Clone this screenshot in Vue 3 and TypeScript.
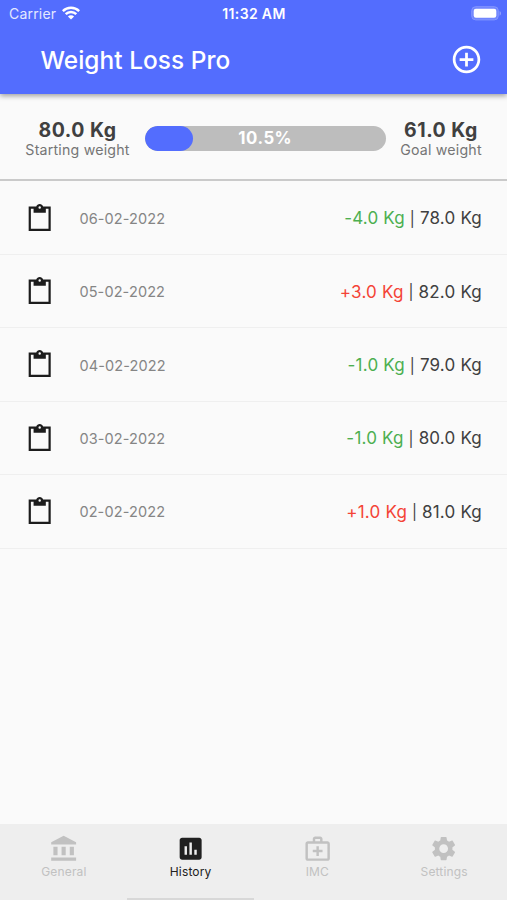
<script setup lang="ts">
interface Entry {
  date: string
  change: string
  weight: string
  gained: boolean
}

interface Tab {
  label: string
  path: string
  active: boolean
}

const progress = 10.5

const entries: Entry[] = [
  { date: '06-02-2022', change: '-4.0 Kg', weight: '78.0 Kg', gained: false },
  { date: '05-02-2022', change: '+3.0 Kg', weight: '82.0 Kg', gained: true },
  { date: '04-02-2022', change: '-1.0 Kg', weight: '79.0 Kg', gained: false },
  { date: '03-02-2022', change: '-1.0 Kg', weight: '80.0 Kg', gained: false },
  { date: '02-02-2022', change: '+1.0 Kg', weight: '81.0 Kg', gained: true },
]

const tabs: Tab[] = [
  {
    label: 'General',
    path: 'M12 1.400 1.800 6.700V8.500h20.400V6.700zM3.600 10.400h3.400v7H3.600zM10.300 10.400h3.400v7h-3.400zM17 10.400h3.400v7H17zM1.800 19.300h20.400V22H1.800z',
    active: false,
  },
  {
    label: 'History',
    path: 'M19 3H5c-1.1 0-2 .9-2 2v14c0 1.1.9 2 2 2h14c1.1 0 2-.9 2-2V5c0-1.1-.9-2-2-2zM9 17H7v-7h2v7zm4 0h-2V7h2v10zm4 0h-2v-4h2v4z',
    active: true,
  },
  {
    label: 'IMC',
    path: 'M20 6h-4V4c0-1.1-.9-2-2-2h-4c-1.1 0-2 .9-2 2v2H4c-1.1 0-2 .9-2 2v12c0 1.1.9 2 2 2h16c1.1 0 2-.9 2-2V8c0-1.1-.9-2-2-2zM10 4h4v2h-4V4zm10 16H4V8h16v12zM13 10h-2v3H8v2h3v3h2v-3h3v-2h-3z',
    active: false,
  },
  {
    label: 'Settings',
    path: 'M19.14 12.94c.04-.3.06-.61.06-.94 0-.32-.02-.64-.07-.94l2.03-1.58c.18-.14.23-.41.12-.61l-1.92-3.32c-.12-.22-.37-.29-.59-.22l-2.39.96c-.5-.38-1.03-.7-1.62-.94l-.36-2.54c-.04-.24-.24-.41-.48-.41h-3.84c-.24 0-.43.17-.47.41l-.36 2.54c-.59.24-1.13.57-1.62.94l-2.39-.96c-.22-.08-.47 0-.59.22L2.74 8.87c-.12.21-.08.47.12.61l2.03 1.58c-.05.3-.09.63-.09.94s.02.64.07.94l-2.03 1.58c-.18.14-.23.41-.12.61l1.92 3.32c.12.22.37.29.59.22l2.39-.96c.5.38 1.03.7 1.62.94l.36 2.54c.05.24.24.41.48.41h3.84c.24 0 .44-.17.47-.41l.36-2.54c.59-.24 1.13-.56 1.62-.94l2.39.96c.22.08.47 0 .59-.22l1.92-3.32c.12-.22.07-.47-.12-.61l-2.01-1.58zM12 15.6c-1.98 0-3.6-1.62-3.6-3.6s1.62-3.6 3.6-3.6 3.6 1.62 3.6 3.6-1.62 3.6-3.6 3.6z',
    active: false,
  },
]
</script>

<template>
  <div class="screen">
    <header class="top">
      <div class="status">
        <div class="carrier">
          <span>Carrier</span>
          <svg class="wifi" viewBox="0 0 18 14">
            <path d="M.8 5.100a11.600 11.600 0 0 1 16.400 0M3.700 8.200a7.500 7.500 0 0 1 10.600 0" fill="none" stroke="#fff" stroke-width="2.500" />
            <path d="M9 13.600 5.900 10.500a4.400 4.400 0 0 1 6.200 0z" fill="#fff" />
          </svg>
        </div>
        <span class="clock">11:32 AM</span>
        <svg class="battery" viewBox="0 0 31 15">
          <rect x="0.700" y="0.700" width="26.600" height="13.200" rx="4" fill="#7085fe" stroke="#8396fe" stroke-width="1" />
          <rect x="2.700" y="2.800" width="22.600" height="9" rx="2.200" fill="#fff" />
          <path d="M28.700 5c1.500.7 1.500 4 0 4.700z" fill="#a0aefe" />
        </svg>
      </div>
      <div class="bar">
        <h1>Weight Loss Pro</h1>
        <button class="add" aria-label="Add">
          <svg viewBox="0 0 24 24">
            <path d="M13 7h-2v4H7v2h4v4h2v-4h4v-2h-4V7zm-1-5C6.480 2 2 6.480 2 12s4.480 10 10 10 10-4.480 10-10S17.520 2 12 2zm0 18c-4.410 0-8-3.590-8-8s3.590-8 8-8 8 3.590 8 8-3.590 8-8 8z" fill="#fff" />
          </svg>
        </button>
      </div>
    </header>

    <section class="summary">
      <div class="goal start">
        <strong>80.0 Kg</strong>
        <span>Starting weight</span>
      </div>
      <div class="track">
        <div class="fill" :style="{ width: `calc(${progress}% + 22.4px)` }"></div>
        <span class="percent">{{ progress }}%</span>
      </div>
      <div class="goal end">
        <strong>61.0 Kg</strong>
        <span>Goal weight</span>
      </div>
    </section>

    <main class="list">
      <div v-for="entry in entries" :key="entry.date" class="row">
        <svg class="clip" viewBox="0 0 24 24">
          <path fill-rule="evenodd" d="M21 2h-6.180C14.400.840 13.300 0 12 0S9.600.840 9.180 2H3v20h18V2zm-9-.200a1 1 0 1 1 0 2 1 1 0 0 1 0-2zm7.200 18.400H4.800V3.800H7v3.300h10V3.800h2.200v16.400z" fill="#1c1c1c" />
        </svg>
        <span class="date">{{ entry.date }}</span>
        <span class="values"><span :class="entry.gained ? 'gain' : 'loss'">{{ entry.change }}</span><span class="divider">|</span>{{ entry.weight }}</span>
      </div>
    </main>

    <nav class="tabs">
      <div v-for="tab in tabs" :key="tab.label" class="tab" :class="{ active: tab.active }">
        <svg viewBox="0 0 24 24"><path :d="tab.path" fill="currentColor" /></svg>
        <span>{{ tab.label }}</span>
      </div>
    </nav>
  </div>
</template>

<style>
body {
  margin: 0;
  background: #fafafa;
}
</style>

<style scoped>
.screen {
  display: flex;
  flex-direction: column;
  width: 100%;
  height: 900px;
  overflow: hidden;
  background: #fafafa;
  font-family: Inter, "Liberation Sans", sans-serif;
  color: #404040;
}
.top {
  position: relative;
  flex: none;
  height: 93.7px;
  background: #536dfe;
  color: #fff;
  box-shadow: 0 2px 5px rgba(0, 0, 0, 0.36);
}
.status {
  display: grid;
  grid-template-columns: 1fr auto 1fr;
  align-items: center;
  height: 27px;
  padding: 0 7px 0 9px;
}
.carrier {
  display: flex;
  align-items: center;
  gap: 5.5px;
  font-size: 14px;
  letter-spacing: 0.2px;
  color: #e4e8ff;
}
.wifi {
  width: 18px;
  height: 14px;
  margin-top: -1px;
}
.clock {
  margin-left: -1px;
  font-size: 14px;
  font-weight: 600;
  letter-spacing: 0.35px;
}
.battery {
  width: 31px;
  height: 15px;
  margin-right: -2px;
  justify-self: end;
}
.bar {
  display: flex;
  align-items: center;
  justify-content: space-between;
  height: 66px;
  padding: 0 24px 0 40.5px;
}
h1 {
  margin: -1px 0 0;
  font-size: 24.4px;
  font-weight: 500;
  letter-spacing: 0.05px;
}
.add {
  display: flex;
  padding: 0;
  margin-top: -1px;
  border: 0;
  background: none;
}
.add svg {
  width: 33px;
  height: 33px;
}
.summary {
  flex: none;
  display: flex;
  align-items: center;
  box-sizing: border-box;
  height: 87.3px;
  padding: 4px 25px 0;
  border-bottom: 2px solid #cacaca;
}
.goal {
  display: flex;
  flex-direction: column;
  align-items: center;
  white-space: nowrap;
}
.start {
  width: 105px;
}
.end {
  width: 82px;
}
.goal strong {
  font-size: 19.5px;
  line-height: 22px;
  font-weight: 650;
  letter-spacing: 0.5px;
}
.goal span {
  font-size: 14.2px;
  line-height: 17px;
  letter-spacing: 0.2px;
  color: #757575;
}
.track {
  position: relative;
  flex: 1;
  height: 24.7px;
  margin: 0 14.5px 0 15px;
  border-radius: 13px;
  background: #bdbdbd;
  overflow: hidden;
}
.fill {
  height: 100%;
  border-radius: 13px;
  background: #536dfe;
}
.percent {
  position: absolute;
  inset: 0;
  text-align: center;
  font-size: 16.8px;
  line-height: 25px;
  font-weight: 700;
  letter-spacing: 0.5px;
  color: #fff;
}
.list {
  flex: 1;
  padding-top: 0.6px;
}
.row {
  display: flex;
  align-items: center;
  box-sizing: border-box;
  height: 73.4px;
  padding: 1px 25px 0;
  border-bottom: 1px solid #efefef;
}
.clip {
  width: 29.4px;
  height: 29.4px;
}
.date {
  margin-left: 25px;
  font-size: 14.5px;
  letter-spacing: 0.12px;
  color: #858585;
}
.values {
  margin-left: auto;
  font-size: 17px;
  letter-spacing: 0.2px;
}
.divider {
  display: inline-block;
  width: 15px;
  font-size: 15px;
  text-align: center;
  vertical-align: 0.5px;
}
.loss {
  color: #4caf50;
}
.gain {
  color: #f44336;
}
.tabs {
  flex: none;
  display: grid;
  grid-template-columns: repeat(4, 1fr);
  height: 76px;
  background: #eee;
}
.tab {
  display: flex;
  flex-direction: column;
  align-items: center;
  box-sizing: border-box;
  padding: 10px 0 0 1px;
  border-bottom: 2px solid transparent;
  color: #c1c1c1;
}
.tab svg {
  width: 29.3px;
  height: 29.3px;
}
.tab span {
  margin-top: 0.7px;
  font-size: 12px;
  line-height: 16px;
  letter-spacing: 0.15px;
}
.active {
  border-bottom-color: #d8d8d8;
  color: #212121;
}
</style>
